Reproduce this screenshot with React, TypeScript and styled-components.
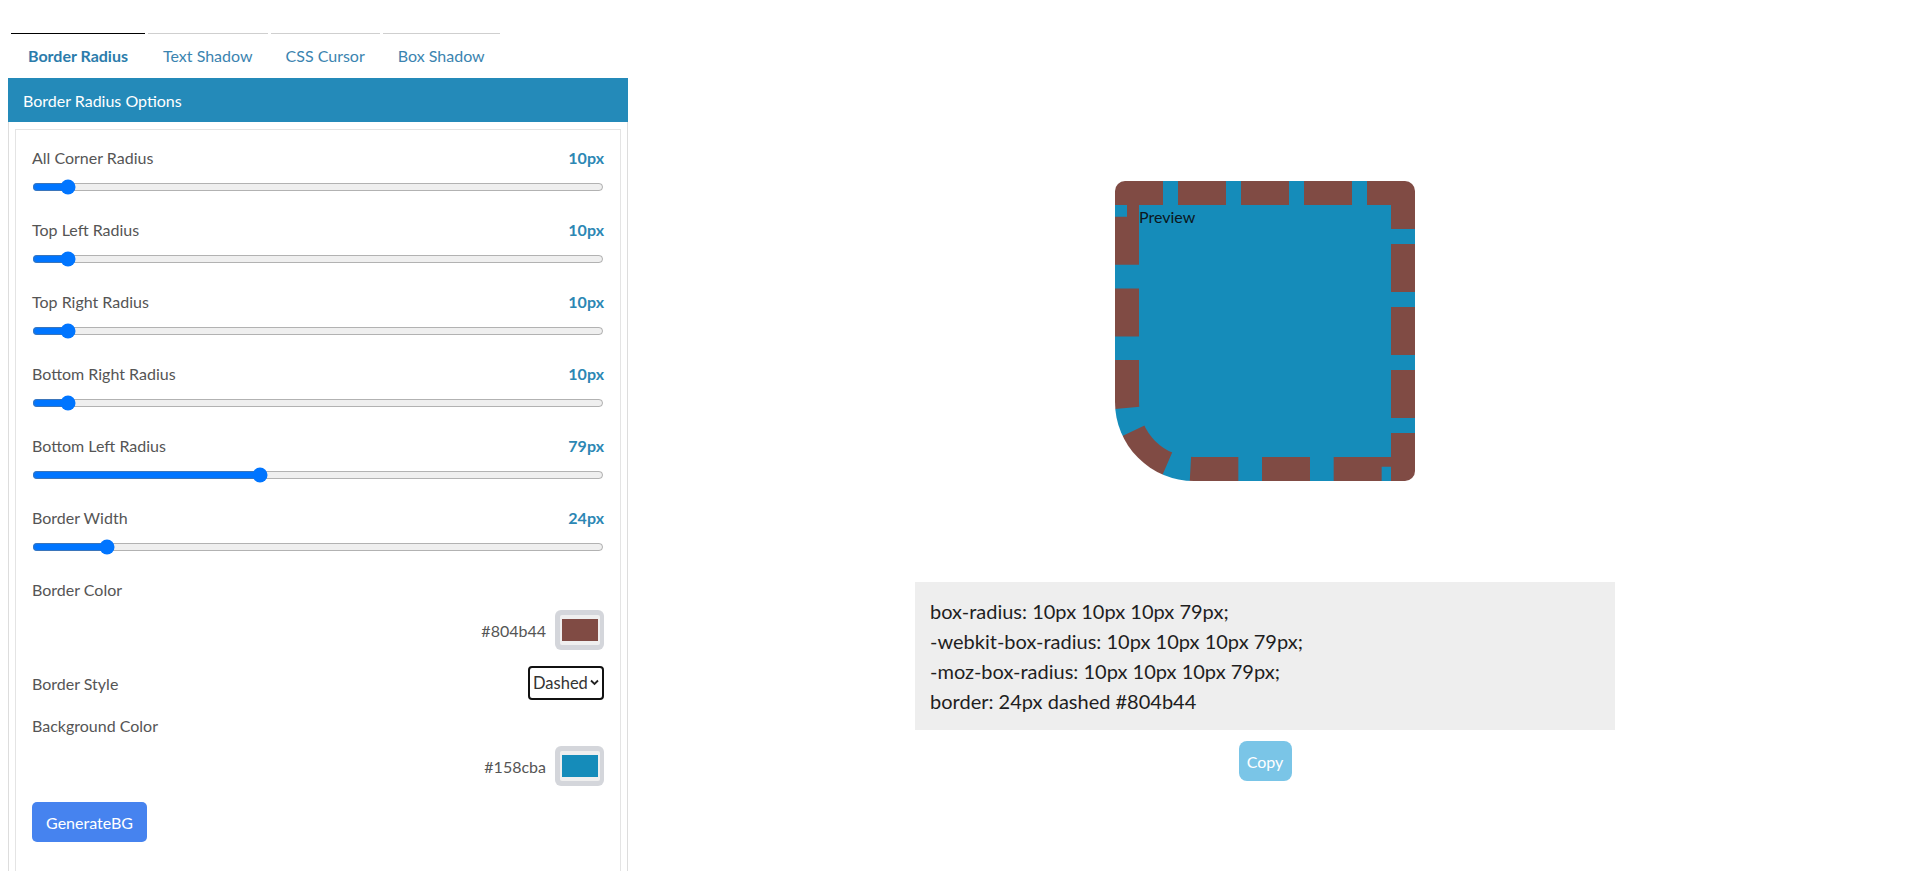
import React, { useState } from "react";
import styled, { createGlobalStyle } from "styled-components";

const GlobalStyle = createGlobalStyle`
  html, body {
    margin: 0;
    padding: 0;
    background: #ffffff;
  }
  body {
    font-family: "Segoe UI", Lato, "Open Sans", sans-serif;
    color: #212529;
  }
  *, *::before, *::after {
    box-sizing: border-box;
  }
`;

const Page = styled.div`
  display: grid;
  grid-template-columns: 639px 1fr;
  padding: 0 17px 30px 0;
`;

const LeftColumn = styled.div`
  padding: 33px 0 0 8px;
`;

const TabBar = styled.nav`
  display: flex;
  gap: 3px;
  padding-left: 3px;
`;

const Tab = styled.button<{ $active?: boolean }>`
  border: none;
  border-top: 1px solid ${(p) => (p.$active ? "#000000" : "#cfcfcf")};
  background: transparent;
  padding: 12px ${(p) => (p.$active ? 17 : 15)}px;
  font-family: inherit;
  font-size: 16px;
  line-height: 20px;
  font-weight: ${(p) => (p.$active ? 700 : 400)};
  color: ${(p) => (p.$active ? "#2b7cab" : "#3b84b0")};
  cursor: pointer;
`;

const Panel = styled.section`
  width: 620px;
  border: 1px solid #dddddd;
  border-top: none;
`;

const PanelHeader = styled.header`
  height: 44px;
  display: flex;
  align-items: center;
  padding: 0 15px;
  margin: 0 -1px;
  background: #248ab9;
  color: #ffffff;
  font-size: 16px;
`;

const PanelBody = styled.div`
  padding: 7px 6px;
`;

const Card = styled.div`
  border: 1px solid #e4e4e4;
  padding: 16px 16px 40px;
`;

const Field = styled.div<{ $gap?: number }>`
  margin-bottom: ${(p) => (p.$gap ?? 23)}px;
`;

const FieldHead = styled.div`
  display: flex;
  justify-content: space-between;
  align-items: center;
  height: 24px;
  line-height: 24px;
`;

const Label = styled.span`
  font-size: 16px;
  color: #555555;
`;

const Value = styled.span`
  font-size: 16px;
  font-weight: 700;
  color: #2c87b4;
`;

const Slider = styled.input`
  display: block;
  width: 100%;
  height: 16px;
  margin: 9px 0 0;
`;

const ColorRow = styled.div`
  display: flex;
  justify-content: flex-end;
  align-items: center;
  gap: 9px;
  margin-top: 8px;
`;

const HexText = styled.span`
  font-size: 16px;
  color: #555555;
`;

const SwatchFrame = styled.div`
  width: 49px;
  height: 40px;
  border-radius: 6px;
  background: #d4d6db;
  display: flex;
  align-items: center;
  justify-content: center;
`;

const SwatchInner = styled.div`
  width: 40px;
  height: 30px;
  border-radius: 2px;
  background: #efefef;
  display: flex;
  align-items: center;
  justify-content: center;
`;

const SwatchColor = styled.div<{ $color: string }>`
  width: 36px;
  height: 22px;
  background: ${(p) => p.$color};
`;

const InlineRow = styled.div`
  display: flex;
  justify-content: space-between;
  align-items: center;
  height: 34px;
  margin-bottom: 14px;
`;

const SelectWrap = styled.div`
  position: relative;
  width: 76px;
  height: 34px;
`;

const Select = styled.select`
  appearance: none;
  -webkit-appearance: none;
  width: 100%;
  height: 100%;
  border: 2px solid #111111;
  border-radius: 4px;
  background: #ffffff;
  padding: 0 0 0 3px;
  font-family: inherit;
  font-size: 16.5px;
  color: #333333;
  outline: none;
`;

const Chevron = styled.svg`
  position: absolute;
  right: 5px;
  top: 13px;
  width: 9px;
  height: 7px;
  pointer-events: none;
`;

const GenerateButton = styled.button`
  margin-top: 16px;
  width: 115px;
  height: 40px;
  border: none;
  border-radius: 5px;
  background: #4683ef;
  color: #ffffff;
  font-family: inherit;
  font-size: 16px;
  cursor: pointer;
`;

const RightColumn = styled.div`
  display: flex;
  flex-direction: column;
  align-items: center;
  padding-top: 181px;
`;

const PreviewBox = styled.div<{ $bg: string; $border: string; $bw: number; $style: string }>`
  width: 300px;
  height: 300px;
  background: ${(p) => p.$bg};
  border: ${(p) => `${p.$bw}px ${p.$style} ${p.$border}`};
  font-size: 16px;
  line-height: 24px;
  color: #0c1720;
`;

const CodeBox = styled.pre`
  margin: 101px 0 0;
  width: 700px;
  padding: 14px 15px;
  background: #eeeeee;
  font-family: inherit;
  font-size: 20px;
  line-height: 30px;
  color: #1e1e1e;
  white-space: pre-wrap;
`;

const CopyButton = styled.button`
  margin-top: 11px;
  width: 53px;
  height: 40px;
  border: none;
  border-radius: 8px;
  background: #7ac5e7;
  color: #ffffff;
  font-family: inherit;
  font-size: 16px;
  padding: 0;
`;

type SliderDef = { key: string; label: string };

const sliders: SliderDef[] = [
  { key: "all", label: "All Corner Radius" },
  { key: "tl", label: "Top Left Radius" },
  { key: "tr", label: "Top Right Radius" },
  { key: "br", label: "Bottom Right Radius" },
  { key: "bl", label: "Bottom Left Radius" },
  { key: "bw", label: "Border Width" },
];

const tabs = ["Border Radius", "Text Shadow", "CSS Cursor", "Box Shadow"];

export default function App() {
  const [vals, setVals] = useState<Record<string, number>>({
    all: 10,
    tl: 10,
    tr: 10,
    br: 10,
    bl: 79,
    bw: 24,
  });
  const [borderColor] = useState("#804b44");
  const [bgColor] = useState("#158cba");
  const [borderStyle, setBorderStyle] = useState("dashed");

  const radius = `${vals.tl}px ${vals.tr}px ${vals.br}px ${vals.bl}px`;

  return (
    <>
      <GlobalStyle />
      <Page>
        <LeftColumn>
          <TabBar>
            {tabs.map((t, i) => (
              <Tab key={t} $active={i === 0}>
                {t}
              </Tab>
            ))}
          </TabBar>
          <Panel>
            <PanelHeader>Border Radius Options</PanelHeader>
            <PanelBody>
              <Card>
                {sliders.map((s) => (
                  <Field key={s.key}>
                    <FieldHead>
                      <Label>{s.label}</Label>
                      <Value>{vals[s.key]}px</Value>
                    </FieldHead>
                    <Slider
                      type="range"
                      min={0}
                      max={200}
                      value={vals[s.key]}
                      onChange={(e) =>
                        setVals({ ...vals, [s.key]: Number(e.target.value) })
                      }
                    />
                  </Field>
                ))}
                <Field $gap={16}>
                  <FieldHead>
                    <Label>Border Color</Label>
                  </FieldHead>
                  <ColorRow>
                    <HexText>{borderColor}</HexText>
                    <SwatchFrame>
                      <SwatchInner>
                        <SwatchColor $color={borderColor} />
                      </SwatchInner>
                    </SwatchFrame>
                  </ColorRow>
                </Field>
                <InlineRow>
                  <Label>Border Style</Label>
                  <SelectWrap>
                    <Select
                      value={borderStyle}
                      onChange={(e) => setBorderStyle(e.target.value)}
                    >
                      <option value="solid">Solid</option>
                      <option value="dashed">Dashed</option>
                      <option value="dotted">Dotted</option>
                      <option value="double">Double</option>
                    </Select>
                    <Chevron viewBox="0 0 9 7">
                      <path d="M1 1.5 L4.5 5 L8 1.5" fill="none" stroke="#222" strokeWidth="1.8" />
                    </Chevron>
                  </SelectWrap>
                </InlineRow>
                <Field $gap={0}>
                  <FieldHead>
                    <Label>Background Color</Label>
                  </FieldHead>
                  <ColorRow>
                    <HexText>{bgColor}</HexText>
                    <SwatchFrame>
                      <SwatchInner>
                        <SwatchColor $color={bgColor} />
                      </SwatchInner>
                    </SwatchFrame>
                  </ColorRow>
                </Field>
                <GenerateButton>GenerateBG</GenerateButton>
              </Card>
            </PanelBody>
          </Panel>
        </LeftColumn>
        <RightColumn>
          <PreviewBox
            $bg={bgColor}
            $border={borderColor}
            $bw={vals.bw}
            $style={borderStyle}
            style={{ borderRadius: radius }}
          >
            Preview
          </PreviewBox>
          <CodeBox>
            {`box-radius: ${radius};\n-webkit-box-radius: ${radius};\n-moz-box-radius: ${radius};\nborder: ${vals.bw}px ${borderStyle} ${borderColor}`}
          </CodeBox>
          <CopyButton>Copy</CopyButton>
        </RightColumn>
      </Page>
    </>
  );
}
